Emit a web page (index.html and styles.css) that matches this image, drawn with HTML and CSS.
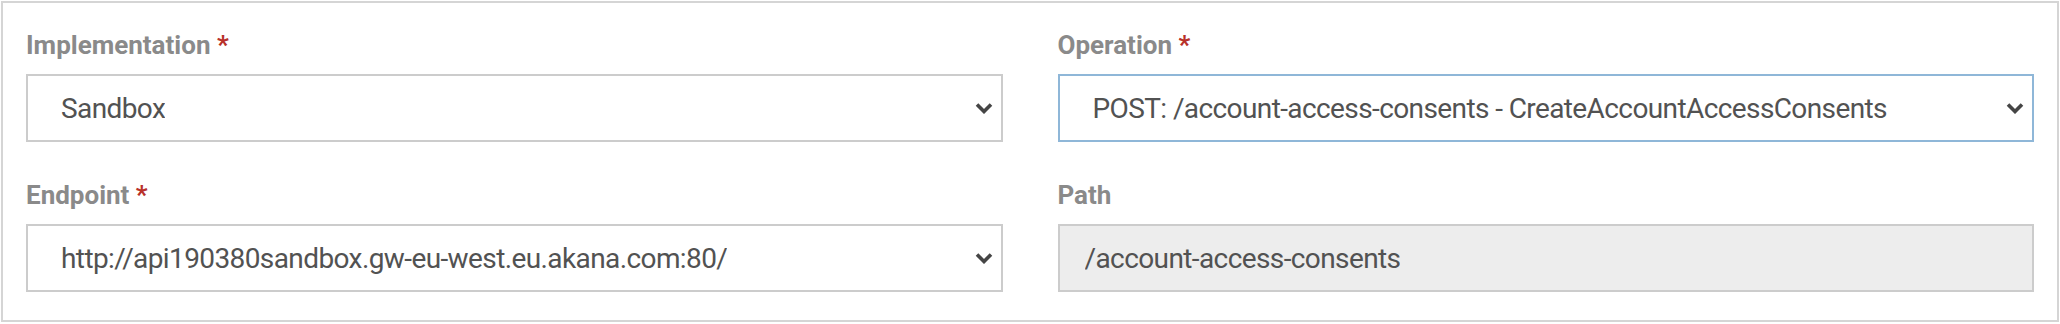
FILE: index.html
```html
<!DOCTYPE html>
<html lang="en">
<head>
<meta charset="utf-8">
<title>Operation form</title>
<link rel="stylesheet" href="styles.css">
</head>
<body>
<div class="panel">
  <div class="grid">
    <div class="field">
      <div class="label">Implementation <span class="req">*</span></div>
      <div class="select">
        <span class="value">Sandbox</span>
        <svg class="chev" width="18" height="12" viewBox="0 0 18 12"><path d="M2 2.5 L9 9.5 L16 2.5" fill="none" stroke="#454545" stroke-width="3.6"/></svg>
      </div>
    </div>
    <div class="field">
      <div class="label">Operation <span class="req">*</span></div>
      <div class="select focused">
        <span class="value">POST: /account-access-consents - CreateAccountAccessConsents</span>
        <svg class="chev" width="18" height="12" viewBox="0 0 18 12"><path d="M2 2.5 L9 9.5 L16 2.5" fill="none" stroke="#454545" stroke-width="3.6"/></svg>
      </div>
    </div>
    <div class="field">
      <div class="label">Endpoint <span class="req">*</span></div>
      <div class="select">
        <span class="value">http://api190380sandbox.gw-eu-west.eu.akana.com:80/</span>
        <svg class="chev" width="18" height="12" viewBox="0 0 18 12"><path d="M2 2.5 L9 9.5 L16 2.5" fill="none" stroke="#454545" stroke-width="3.6"/></svg>
      </div>
    </div>
    <div class="field">
      <div class="label">Path</div>
      <div class="input readonly">
        <span class="value">/account-access-consents</span>
      </div>
    </div>
  </div>
</div>
</body>
</html>
```

FILE: styles.css
```css
html, body {
  margin: 0;
  padding: 0;
  background: #ffffff;
}

body {
  font-family: Roboto, "Liberation Sans", Arial, sans-serif;
}

.panel {
  margin: 1px 1px 0 1px;
  border: 2px solid #d5d5d5;
  padding: 27px 23px 28px 23px;
  background: #ffffff;
}

.grid {
  display: grid;
  grid-template-columns: 1fr 1fr;
  column-gap: 55px;
  row-gap: 38px;
}

.field {
  display: flex;
  flex-direction: column;
}

.label {
  font-size: 26px;
  line-height: 30px;
  font-weight: 700;
  color: #8a8a8a;
  margin-bottom: 14px;
  white-space: nowrap;
}

.req {
  color: #b8312a;
}

.select,
.input {
  box-sizing: border-box;
  height: 68px;
  border: 2px solid #cccccc;
  display: flex;
  align-items: center;
  font-size: 28px;
  letter-spacing: -0.6px;
  color: #525252;
  background: #ffffff;
}

.select {
  justify-content: space-between;
  padding: 0 8px 0 33px;
}

.select.focused {
  border-color: #8fb7d8;
}

.input {
  padding: 0 25px;
}

.input.readonly {
  background: #ededed;
}

.value {
  white-space: nowrap;
  overflow: hidden;
}

.chev {
  flex: none;
  display: block;
}
```
